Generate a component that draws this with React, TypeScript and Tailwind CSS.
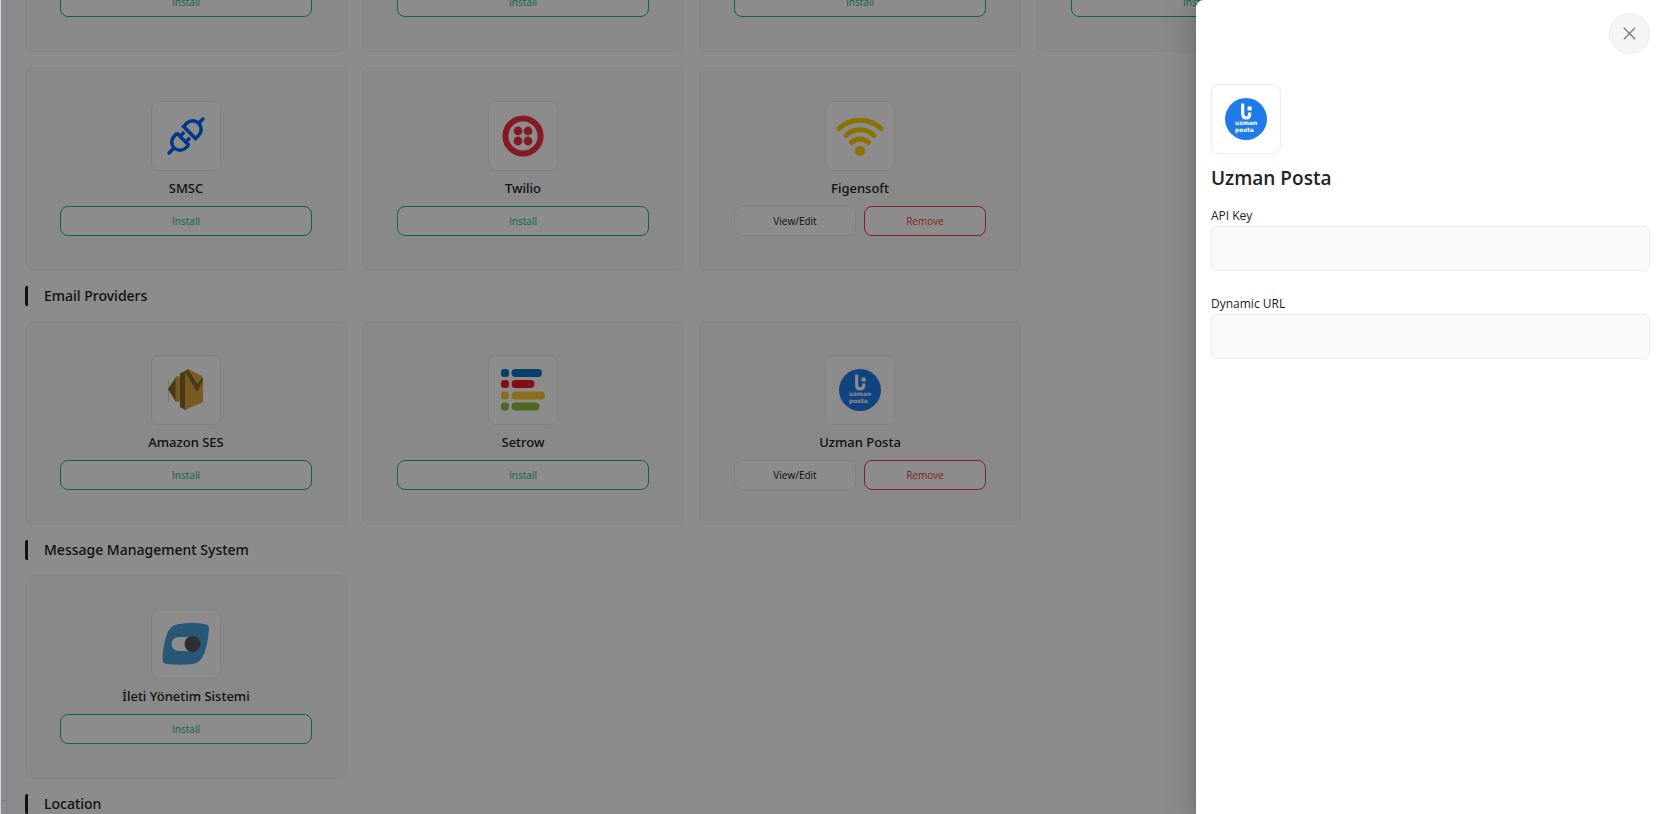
import React from 'react';
import { X } from 'lucide-react';

interface Provider {
  name?: string;
  logo?: React.ReactNode;
  installed?: boolean;
}

const SmscLogo = () => (
  <svg width="40" height="40" viewBox="-1 -1 40 40" fill="none" stroke="#0064fa" strokeWidth="3.500">
    <g transform="rotate(-45 19 19)">
      <path d="M-5 19h6M37 19h6" strokeLinecap="round" />
      <path d="M14.500 10v18M14.500 10.700h-4a8.300 8.300 0 0 0 0 16.600h4M15 15h5.500M15 23h5.500" />
      <path d="M24 10.500v17h4.500a8.500 8.500 0 0 0 0-17z" />
    </g>
  </svg>
);

const TwilioLogo = () => (
  <svg width="42" height="42" viewBox="0 0 42 42" fill="#f22f46">
    <circle cx="21" cy="21" r="17.6" fill="none" stroke="#f22f46" strokeWidth="6" />
    <circle cx="16" cy="16" r="4.4" />
    <circle cx="26" cy="16" r="4.4" />
    <circle cx="16" cy="26" r="4.4" />
    <circle cx="26" cy="26" r="4.4" />
  </svg>
);

const FigensoftLogo = () => (
  <svg width="48" height="40" viewBox="0 0 48 40" fill="none" stroke="#fcd000" strokeWidth="5" strokeLinecap="round">
    <path d="M3 12.500a31 31 0 0 1 42 0" />
    <path d="M10 19.500a20 20 0 0 1 28 0" />
    <path d="M15.500 26.500a12 12 0 0 1 17 0" />
    <circle cx="24" cy="35" r="5" fill="#fcd000" stroke="none" />
  </svg>
);

const AmazonSesLogo = () => (
  <svg width="36" height="42" viewBox="0 0 36 42">
    <path d="M0.500 11v22" stroke="#d9a741" strokeWidth="0.5" />
    <path d="M0 20l8-12v25z" fill="#876929" />
    <path d="M7.500 8.500L9 7l3.500 1v24L9 33l-1.500-1z" fill="#d9a741" />
    <path d="M12 4.500L17 2l3-2 3 2v34l-6 5-5-3z" fill="#876929" />
    <path d="M17 2.500L20 0l14 7 1 4v22l-18 8z" fill="#d9a741" />
    <path d="M17 2.500L20.500 1l8.500 14 5.500-6 .5 2.500L29 23z" fill="#876929" />
  </svg>
);

const SetrowLogo = () => (
  <svg width="44" height="42" viewBox="0 0 44 42">
    <g fill="#0d77bd"><rect width="8" height="8" rx="3" /><rect x="10.500" width="30.500" height="8" rx="4" /></g>
    <g fill="#ed1c2a"><rect y="11" width="8" height="8" rx="3" /><rect x="10.500" y="11" width="23" height="8" rx="4" /></g>
    <g fill="#fbc934"><rect y="22.500" width="8" height="8" rx="3" /><rect x="10.500" y="22.500" width="33.500" height="8" rx="4" /></g>
    <g fill="#8fbe3f"><rect y="33.500" width="8" height="8" rx="3" /><rect x="10.500" y="33.500" width="28" height="8" rx="4" /></g>
  </svg>
);

const UzmanPostaLogo = () => (
  <svg width="42" height="42" viewBox="0 0 42 42">
    <circle cx="21" cy="21" r="21" fill="#1f7bea" />
    <path d="M17.700 5.500V16q0 4 3.500 4t3.500-4v-1.500" fill="none" stroke="#fff" strokeWidth="3.200" />
    <rect x="22.500" y="8.500" width="4.200" height="4" rx="0.5" fill="#fff" />
    <g fill="#fff" fontFamily="DejaVu Sans, sans-serif" fontWeight="700" fontSize="6">
      <text x="10" y="27.300">uzman</text>
      <text x="10" y="34.300">posta</text>
    </g>
  </svg>
);

const IletiLogo = () => (
  <svg width="48" height="42" viewBox="0 0 48 42">
    <path d="M17 1Q30-1 43 1q4 1 4 5-1 15-5 25-3 8-11 10-13 1.500-26 0-5-1-4.500-5Q1 22 5 11 8 2 17 1z" fill="#4a9fda" />
    <rect x="9.500" y="14" width="28" height="14" rx="7" fill="#fff" />
    <circle cx="30.500" cy="21" r="8" fill="#55545c" />
  </svg>
);

const smsProviders: Provider[] = [
  {},
  {},
  {},
  {},
  { name: 'SMSC', logo: <SmscLogo /> },
  { name: 'Twilio', logo: <TwilioLogo /> },
  { name: 'Figensoft', logo: <FigensoftLogo />, installed: true },
];

const emailProviders: Provider[] = [
  { name: 'Amazon SES', logo: <AmazonSesLogo /> },
  { name: 'Setrow', logo: <SetrowLogo /> },
  { name: 'Uzman Posta', logo: <UzmanPostaLogo />, installed: true },
];

const messageProviders: Provider[] = [{ name: 'İleti Yönetim Sistemi', logo: <IletiLogo /> }];

const LogoBox = ({ children }: { children?: React.ReactNode }) => (
  <div className="flex size-[70px] shrink-0 items-center justify-center rounded-lg border border-[#ececec] bg-white">{children}</div>
);

const ProviderCard = ({ provider }: { provider: Provider }) => (
  <div className="flex flex-col items-center rounded-lg border border-[#f5f5f5] bg-[#fafafa] px-[34px] pt-[33px] pb-[34px]">
    <LogoBox>{provider.logo}</LogoBox>
    <h3 className="flex h-[35px] items-center font-['Noto_Sans',sans-serif] text-[13px] font-medium">{provider.name}</h3>
    {provider.installed ? (
      <div className="flex w-full gap-2">
        <button className="h-[30px] flex-1 rounded-lg border border-[#ececec] bg-white text-[10px]">View/Edit</button>
        <button className="h-[30px] flex-1 rounded-lg border border-[#f5393d] bg-white text-[10px] text-[#f5393d]">Remove</button>
      </div>
    ) : (
      <button className="h-[30px] w-full rounded-lg border border-[#10b981] bg-white text-[10px] text-[#10b981]">Install</button>
    )}
  </div>
);

const SectionTitle = ({ children }: { children: React.ReactNode }) => (
  <h2 className="flex h-5 items-center rounded-xs border-l-3 border-[#222] pl-4 font-['Noto_Sans',sans-serif] text-sm font-medium">{children}</h2>
);

const ProviderGrid = ({ providers }: { providers: Provider[] }) => (
  <div className="grid grid-cols-4 gap-[15px]">
    {providers.map((p, i) => <ProviderCard key={i} provider={p} />)}
  </div>
);

const Field = ({ id, label }: { id: string; label: string }) => (
  <div className="flex flex-col">
    <label htmlFor={id} className="flex h-5 items-center text-[12px]">{label}</label>
    <input id={id} type="text" className="h-[45px] w-full rounded-md border border-[#ececec] bg-[#fafafa] px-3 text-[13px] outline-none" />
  </div>
);

const App: React.FC = () => {
  return (
    <div className="relative flex h-screen overflow-hidden border-l border-[#c3d6f2] bg-white font-['Open_Sans','Noto_Sans',sans-serif] text-[#222]">
      <div className="flex w-[6px] shrink-0 flex-col justify-end border-r border-[#ececec]">
        <div className="h-[14px] border-t border-[#ececec]"></div>
      </div>
      <main className="flex flex-1 flex-col justify-end overflow-hidden pl-[18px]">
        <div className="flex w-full max-w-[1333px] flex-col gap-[15px]">
          <ProviderGrid providers={smsProviders} />
          <SectionTitle>Email Providers</SectionTitle>
          <ProviderGrid providers={emailProviders} />
          <SectionTitle>Message Management System</SectionTitle>
          <ProviderGrid providers={messageProviders} />
          <SectionTitle>Location</SectionTitle>
        </div>
      </main>

      <div className="absolute inset-0 bg-black/45"></div>

      <aside
        role="dialog"
        aria-label="Uzman Posta"
        className="absolute inset-y-0 right-0 flex w-[474px] flex-col rounded-tl-lg bg-white pt-[13px] pr-5 pl-[15px] shadow-[-6px_0_16px_0_rgba(0,0,0,0.08),-3px_0_6px_-4px_rgba(0,0,0,0.12),-9px_0_28px_8px_rgba(0,0,0,0.05)]"
      >
        <button aria-label="Close" className="flex size-[41px] items-center justify-center self-end rounded-full border border-[#ececec] bg-[#f5f5f5] text-[#777]">
          <X size={21} strokeWidth={1.5} />
        </button>
        <div className="mt-[30px]">
          <LogoBox><UzmanPostaLogo /></LogoBox>
        </div>
        <h1 className="mt-2 flex h-8 items-center text-[19px] font-semibold">Uzman Posta</h1>
        <div className="mt-3 flex flex-col gap-[23px]">
          <Field id="apiKey" label="API Key" />
          <Field id="dynamicUrl" label="Dynamic URL" />
        </div>
      </aside>
    </div>
  );
};

export default App;
